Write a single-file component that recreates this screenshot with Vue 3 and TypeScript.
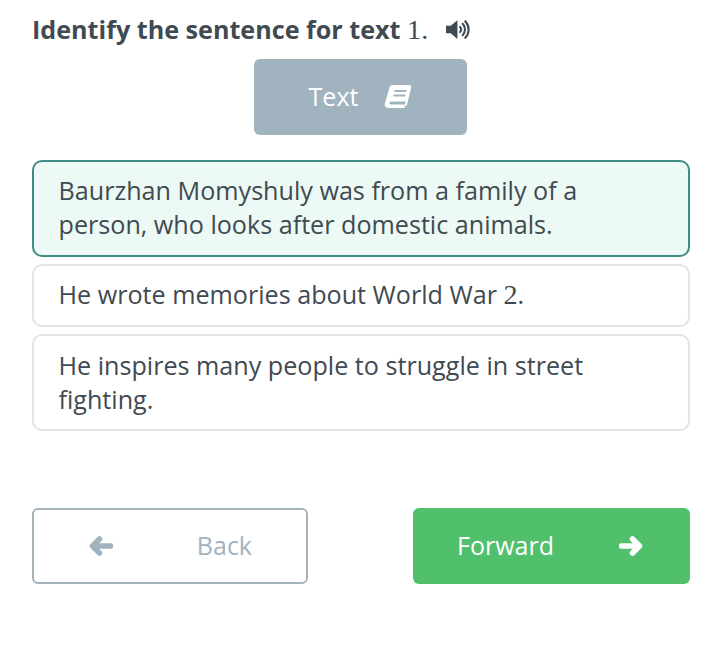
<script setup lang="ts">
interface Answer {
  id: number
  label: string
  num?: string
  tail?: string
  selected?: boolean
}

const answers: Answer[] = [
  { id: 1, label: 'Baurzhan Momyshuly was from a family of a person, who looks after domestic animals.', selected: true },
  { id: 2, label: 'He wrote memories about World War ', num: '2', tail: '.' },
  { id: 3, label: 'He inspires many people to struggle in street fighting.' }
]
</script>

<template>
  <div class="page">
    <div class="title">
      <span>Identify the sentence for text <span class="num">1.</span></span>
      <svg class="speaker" viewBox="0 0 24 20" width="25" height="21">
        <path d="M0 6.500h4.500L11 1V19L4.500 13.500H0z" fill="#3f4a52" />
        <path d="M13.500 7.500a3.500 3.500 0 0 1 0 5" fill="none" stroke="#3f4a52" stroke-width="2" stroke-linecap="round" />
        <path d="M16 4.500a8 8 0 0 1 0 11" fill="none" stroke="#3f4a52" stroke-width="2" stroke-linecap="round" />
        <path d="M18.500 2a11.500 11.500 0 0 1 0 16" fill="none" stroke="#3f4a52" stroke-width="2" stroke-linecap="round" />
      </svg>
    </div>

    <div class="text-row">
      <button type="button" class="text-btn">
        <span>Text</span>
        <svg viewBox="0 0 28 25" width="28" height="25">
          <path d="M8.500 1h16.500c1.600 0 2.600 1 2.200 2.500l-4 16.500c-.3 1.200-1 2-2 2.400l-.3-1.700 .7-3.200H7.500c-2.400 0-2.800 2.800-.8 3h14.300l-.6 3.500H4.500C1.500 24 .3 21.800 .9 19.300L5.500 3.500C6 2 7 1 8.500 1z" fill="#fff" />
          <path d="M10.500 7h12M9.500 11.500h12" stroke="#a0b3bf" stroke-width="2" />
        </svg>
      </button>
    </div>

    <div class="answers">
      <div v-for="a in answers" :key="a.id" class="answer" :class="{ selected: a.selected }">
        {{ a.label }}<span v-if="a.num" class="num">{{ a.num }}</span>{{ a.tail }}
      </div>
    </div>

    <div class="nav">
      <button type="button" class="nav-btn back">
        <svg viewBox="0 0 24 22" width="24" height="22">
          <path d="M10.500 4 3.500 11l7 7M5 11h16.500" fill="none" stroke="#a0b3bf" stroke-width="5.500" stroke-linecap="round" stroke-linejoin="round" />
        </svg>
        <span>Back</span>
      </button>
      <button type="button" class="nav-btn forward">
        <span>Forward</span>
        <svg viewBox="0 0 24 22" width="24" height="22">
          <path d="M13.500 4l7 7-7 7M19 11H2.500" fill="none" stroke="#fff" stroke-width="5.500" stroke-linecap="round" stroke-linejoin="round" />
        </svg>
      </button>
    </div>
  </div>
</template>

<style>
html, body {
  background: #fff;
}
</style>

<style scoped>
.page {
  box-sizing: border-box;
  width: 707px;
  height: 657px;
  padding: 12px 17px 0 32px;
  font-family: "Open Sans", "Noto Sans", sans-serif;
  color: #3f4a52;
}
.title {
  display: flex;
  align-items: center;
  gap: 18px;
  height: 34px;
  font-size: 25.150px;
  font-weight: 700;
}
.num {
  font-family: "Liberation Serif", serif;
  font-weight: 400;
  font-size: 1.120em;
  line-height: 0;
}
.speaker {
  flex: none;
  margin-top: 1px;
}
.text-row {
  display: flex;
  justify-content: center;
  margin-top: 13px;
  padding-right: 1px;
}
.text-btn {
  display: flex;
  align-items: center;
  justify-content: center;
  gap: 26px;
  width: 213px;
  height: 76px;
  padding: 0 0 2px;
  border: 0;
  border-radius: 6px;
  background: #a0b3bf;
  color: #fff;
  font: inherit;
  font-size: 25px;
}
.answers {
  display: flex;
  flex-direction: column;
  gap: 7px;
  margin-top: 25px;
}
.answer {
  box-sizing: border-box;
  padding: 11px 25px 14px 24.500px;
  border: 2px solid #e1e5e8;
  border-radius: 10px;
  font-size: 25.150px;
  line-height: 34px;
}
.answer:last-child {
  padding-top: 12px;
  padding-bottom: 13px;
}
.answer.selected {
  border-color: #3f8b86;
  background: #edf9f4;
}
.nav {
  display: flex;
  justify-content: space-between;
  margin-top: 77px;
}
.nav-btn {
  box-sizing: border-box;
  display: flex;
  align-items: center;
  height: 76px;
  padding-bottom: 3px;
  border-radius: 6px;
  font: inherit;
  font-size: 25px;
}
.nav-btn svg {
  margin-top: 1px;
}
.back {
  width: 276px;
  padding-left: 55px;
  padding-right: 54px;
  justify-content: space-between;
  border: 2px solid #a4b3bb;
  background: #fff;
  color: #a0b3bf;
}
.forward {
  width: 277px;
  padding-left: 44px;
  padding-right: 47px;
  justify-content: space-between;
  border: 0;
  background: #50c06c;
  color: #fff;
}
</style>
